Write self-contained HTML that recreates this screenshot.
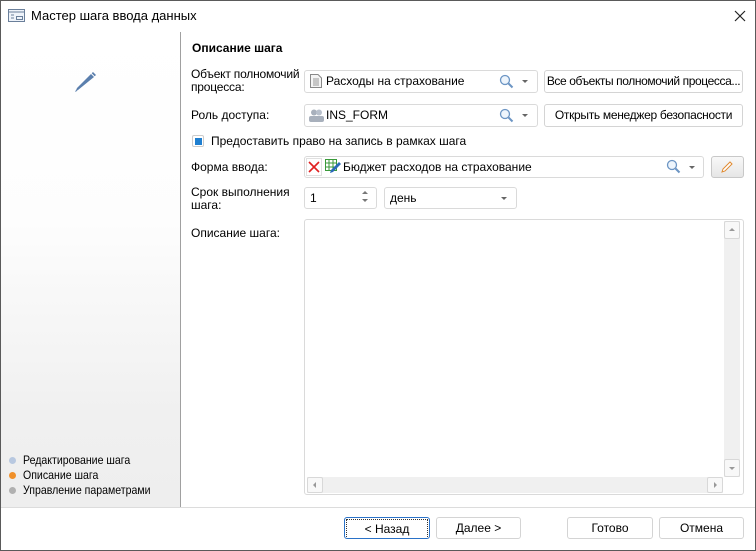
<!DOCTYPE html>
<html><head><meta charset="utf-8"><style>
*{box-sizing:border-box;margin:0;padding:0}
body{width:756px;height:551px;overflow:hidden;background:#fff;font-family:"Liberation Sans","DejaVu Sans",sans-serif;font-size:12px;color:#000;position:relative}
.a{position:absolute;white-space:nowrap}
.win{position:absolute;left:0;top:0;width:756px;height:551px;border:1px solid #5a5a5a}
.left{position:absolute;left:1px;top:32px;width:179px;height:475px;background:linear-gradient(#fff 0%,#fdfdfd 40%,#f0f0f0 80%,#eeeeee 100%)}
.vl{position:absolute;left:180px;top:32px;width:1px;height:475px;background:#a0a0a0}
.bot{position:absolute;left:1px;top:507px;width:754px;height:43px;background:#fff;border-top:1px solid #dcdcdc}
.box{position:absolute;border:1px solid #dadada;border-radius:3px;background:#fff}
.btn{position:absolute;border:1px solid #d4d4d4;border-radius:3px;background:#fff;text-align:center;line-height:20px;white-space:nowrap;overflow:hidden}
.dd{position:absolute;width:0;height:0;border-left:3px solid transparent;border-right:3px solid transparent;border-top:3px solid #666}
.dot{position:absolute;width:7px;height:7px;border-radius:50%}
.li{position:absolute;white-space:nowrap;transform:scaleX(0.88);transform-origin:0 0}
</style></head><body>
<div class="win"></div>
<svg class="a" style="left:8px;top:9px" width="17" height="13"><rect x="0.5" y="0.5" width="16" height="12" fill="#eef3fa" stroke="#6a7f9a"/><line x1="1" y1="3" x2="16" y2="3" stroke="#6a7f9a"/><line x1="3" y1="6" x2="6" y2="6" stroke="#6a7f9a"/><line x1="3" y1="9" x2="6" y2="9" stroke="#6a7f9a"/><rect x="8.5" y="7.5" width="6" height="3" fill="none" stroke="#6a7f9a"/></svg>
<div class="a" style="left:31px;top:8px;font-size:13px">Мастер шага ввода данных</div>
<svg class="a" style="left:734px;top:10px" width="12" height="12"><path d="M1 1L11 11M11 1L1 11" stroke="#222" stroke-width="1.2"/></svg>
<div class="left"></div>
<div class="vl"></div>
<svg class="a" style="left:72px;top:68px" width="26" height="26"><path d="M4 22L3 24 5 23 Z" fill="#5b7fad"/><path d="M6 22L3.5 23.5 5 20 19 6 22 9 Z" fill="#5b7fad"/><path d="M19.7 5.3L21 4 24 7 22.7 8.3Z" fill="#5b7fad"/></svg>
<div class="dot" style="left:9px;top:457px;background:#b8c8e0"></div>
<div class="li" style="left:23px;top:453px">Редактирование шага</div>
<div class="dot" style="left:9px;top:472px;background:#f0902a"></div>
<div class="li" style="left:23px;top:468px">Описание шага</div>
<div class="dot" style="left:9px;top:487px;background:#b0b0b0"></div>
<div class="li" style="left:23px;top:483px">Управление параметрами</div>

<div class="a" style="left:192px;top:41px;font-weight:bold">Описание шага</div>
<div class="a" style="left:191px;top:68px;line-height:13px;letter-spacing:-0.2px">Объект полномочий<br>процесса:</div>
<div class="box" style="left:304px;top:70px;width:234px;height:23px"></div>
<svg class="a" style="left:310px;top:74px" width="12" height="14"><path d="M0.5 0.5H8L11.5 4V13.5H0.5Z" fill="#f4f4f4" stroke="#888"/><path d="M3 5H9M3 7H9M3 9H9M3 11H9" stroke="#999"/></svg>
<div class="a" style="left:326px;top:74px">Расходы на страхование</div>
<svg class="a" style="left:499px;top:74px" width="15" height="15"><circle cx="6" cy="6" r="4.5" fill="#eef5fc" stroke="#6c95c4" stroke-width="1.3"/><path d="M9.5 9.5L13.5 13.5" stroke="#6c95c4" stroke-width="2"/></svg>
<div class="dd" style="left:522px;top:80px"></div>
<div class="btn" style="left:544px;top:70px;width:199px;height:23px;letter-spacing:-0.4px">Все объекты полномочий процесса...</div>

<div class="a" style="left:191px;top:108px">Роль доступа:</div>
<div class="box" style="left:304px;top:104px;width:234px;height:23px"></div>
<svg class="a" style="left:308px;top:109px" width="17" height="13"><circle cx="6" cy="3.5" r="3" fill="#a8b0bc"/><circle cx="11" cy="3.5" r="3" fill="#b8c0cc"/><rect x="1" y="7" width="15" height="6" rx="2" fill="#a8b0bc"/></svg>
<div class="a" style="left:326px;top:108px">INS_FORM</div>
<svg class="a" style="left:499px;top:108px" width="15" height="15"><circle cx="6" cy="6" r="4.5" fill="#eef5fc" stroke="#6c95c4" stroke-width="1.3"/><path d="M9.5 9.5L13.5 13.5" stroke="#6c95c4" stroke-width="2"/></svg>
<div class="dd" style="left:522px;top:114px"></div>
<div class="btn" style="left:544px;top:104px;width:199px;height:23px;letter-spacing:-0.3px">Открыть менеджер безопасности</div>

<div class="a" style="left:192px;top:135px;width:12px;height:12px;border:1px solid #ccc;border-radius:2px;background:#fff"></div>
<div class="a" style="left:195px;top:138px;width:7px;height:7px;background:#1f7fd0"></div>
<div class="a" style="left:211px;top:134px">Предоставить право на запись в рамках шага</div>

<div class="a" style="left:191px;top:160px">Форма ввода:</div>
<div class="box" style="left:304px;top:156px;width:400px;height:22px"></div>
<div class="a" style="left:306px;top:158px;width:16px;height:18px;border:1px solid #e0e0e0;background:#fff"></div>
<svg class="a" style="left:308px;top:161px" width="12" height="12"><path d="M1 1L11 11M11 1L1 11" stroke="#e02020" stroke-width="1.6"/></svg>
<svg class="a" style="left:325px;top:159px" width="16" height="16"><rect x="0.5" y="0.5" width="11" height="11" fill="#fff" stroke="#3a9a3a"/><path d="M0 4H12M0 8H12M4 0V12M8 0V12" stroke="#3a9a3a"/><path d="M5 14L6 11 14 3 16 5 8 13Z" fill="#2a6ab8"/></svg>
<div class="a" style="left:343px;top:160px">Бюджет расходов на страхование</div>
<svg class="a" style="left:666px;top:159px" width="15" height="15"><circle cx="6" cy="6" r="4.5" fill="#eef5fc" stroke="#6c95c4" stroke-width="1.3"/><path d="M9.5 9.5L13.5 13.5" stroke="#6c95c4" stroke-width="2"/></svg>
<div class="dd" style="left:689px;top:166px"></div>
<div class="btn" style="left:711px;top:156px;width:33px;height:22px;background:linear-gradient(#f8f8f8,#e6e6e6);border-color:#c8c8c8"></div>
<svg class="a" style="left:720px;top:160px" width="14" height="14"><path d="M2 12L3 9 10 2 12 4 5 11Z" fill="#fff" stroke="#e08a30"/></svg>

<div class="a" style="left:191px;top:186px;line-height:13px">Срок выполнения<br>шага:</div>
<div class="box" style="left:304px;top:187px;width:73px;height:22px"></div>
<div class="a" style="left:310px;top:191px">1</div>
<div class="a" style="left:362px;top:191px;border-left:3px solid transparent;border-right:3px solid transparent;border-bottom:3px solid #777"></div>
<div class="a" style="left:362px;top:199px;border-left:3px solid transparent;border-right:3px solid transparent;border-top:3px solid #777"></div>
<div class="box" style="left:384px;top:187px;width:133px;height:22px"></div>
<div class="a" style="left:390px;top:191px">день</div>
<div class="dd" style="left:501px;top:197px"></div>

<div class="a" style="left:191px;top:226px">Описание шага:</div>
<div class="box" style="left:304px;top:219px;width:440px;height:276px"></div>
<div class="a" style="left:724px;top:221px;width:16px;height:256px;background:#f0f0f0"></div>
<div class="a" style="left:724px;top:221px;width:16px;height:18px;border:1px solid #d8d8d8;border-radius:2px;background:#f8f8f8"></div>
<div class="a" style="left:729px;top:228px;border-left:3px solid transparent;border-right:3px solid transparent;border-bottom:3px solid #999"></div>
<div class="a" style="left:724px;top:459px;width:16px;height:18px;border:1px solid #d8d8d8;border-radius:2px;background:#f8f8f8"></div>
<div class="a" style="left:729px;top:467px;border-left:3px solid transparent;border-right:3px solid transparent;border-top:3px solid #999"></div>
<div class="a" style="left:307px;top:477px;width:416px;height:16px;background:#f0f0f0"></div>
<div class="a" style="left:307px;top:477px;width:16px;height:16px;border:1px solid #d8d8d8;border-radius:2px;background:#f8f8f8"></div>
<div class="a" style="left:313px;top:482px;border-top:3px solid transparent;border-bottom:3px solid transparent;border-right:3px solid #999"></div>
<div class="a" style="left:707px;top:477px;width:16px;height:16px;border:1px solid #d8d8d8;border-radius:2px;background:#f8f8f8"></div>
<div class="a" style="left:714px;top:482px;border-top:3px solid transparent;border-bottom:3px solid transparent;border-left:3px solid #999"></div>

<div class="bot"></div>
<div class="btn" style="left:344px;top:517px;width:86px;height:22px;border:1px solid #2a72c8"><span style="display:block;margin:1px;border:1px dotted #333;line-height:18px">&lt; Назад</span></div>
<div class="btn" style="left:436px;top:517px;width:85px;height:22px">Далее &gt;</div>
<div class="btn" style="left:567px;top:517px;width:86px;height:22px">Готово</div>
<div class="btn" style="left:659px;top:517px;width:85px;height:22px">Отмена</div>
</body></html>
